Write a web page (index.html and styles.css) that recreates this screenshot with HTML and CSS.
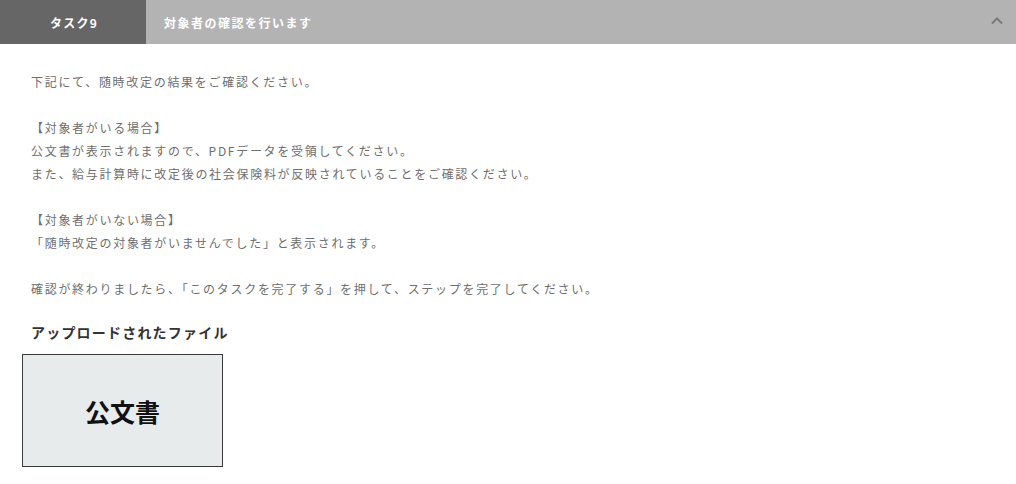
FILE: index.html
```html
<!DOCTYPE html>
<html lang="ja">
<head>
<meta charset="utf-8">
<link rel="stylesheet" href="styles.css">
</head>
<body>
<div class="header">
  <div class="tab">タスク9</div>
  <div class="title">対象者の確認を行います</div>
  <svg class="chev" width="14" height="9" viewBox="0 0 14 9"><path d="M2 7.5 L7 2.5 L12 7.5" fill="none" stroke="#7a7a7a" stroke-width="2"/></svg>
</div>
<div class="content">
  <p class="desc">下記にて、随時改定の結果をご確認ください。<br><br>【対象者がいる場合】<br>公文書が表示されますので、PDFデータを受領してください。<br>また、給与計算時に改定後の社会保険料が反映されていることをご確認ください。<br><br>【対象者がいない場合】<br>「随時改定の対象者がいませんでした」と表示されます。<br><br>確認が終わりましたら、「このタスクを完了する」を押して、ステップを完了してください。</p>
  <h3 class="files-title">アップロードされたファイル</h3>
  <div class="file">公文書</div>
</div>
</body>
</html>
```
FILE: styles.css
```css
html, body { margin: 0; padding: 0; background: #fff; }
body { font-family: "Noto Sans CJK JP", "Noto Sans", sans-serif; }
.header { display: flex; align-items: center; height: 44px; background: #b3b3b3; }
.tab { width: 146px; height: 100%; background: #666; color: #fff; font-weight: 700; font-size: 12px; letter-spacing: 1.2px; display: flex; align-items: center; justify-content: center; padding-left: 2px; box-sizing: border-box; }
.title { flex: 1; padding-left: 18px; color: #fff; font-weight: 700; font-size: 12px; letter-spacing: 1.5px; }
.chev { margin-right: 12px; margin-top: -4px; }
.content { padding: 0 22px; }
.desc { margin: 0; padding: 26px 9px 0; font-size: 12px; line-height: 23px; letter-spacing: 1.7px; color: #6e6e6e; }
.files-title { margin: 22px 9px 0; font-size: 14px; font-weight: 700; color: #333; letter-spacing: 1.2px; line-height: 20px; }
.file { margin-top: 12px; width: 199px; height: 111px; background: #e8ebec; border: 1px solid #3a3a3a; display: flex; align-items: center; justify-content: center; font-size: 25px; font-weight: 700; color: #111; }
```
